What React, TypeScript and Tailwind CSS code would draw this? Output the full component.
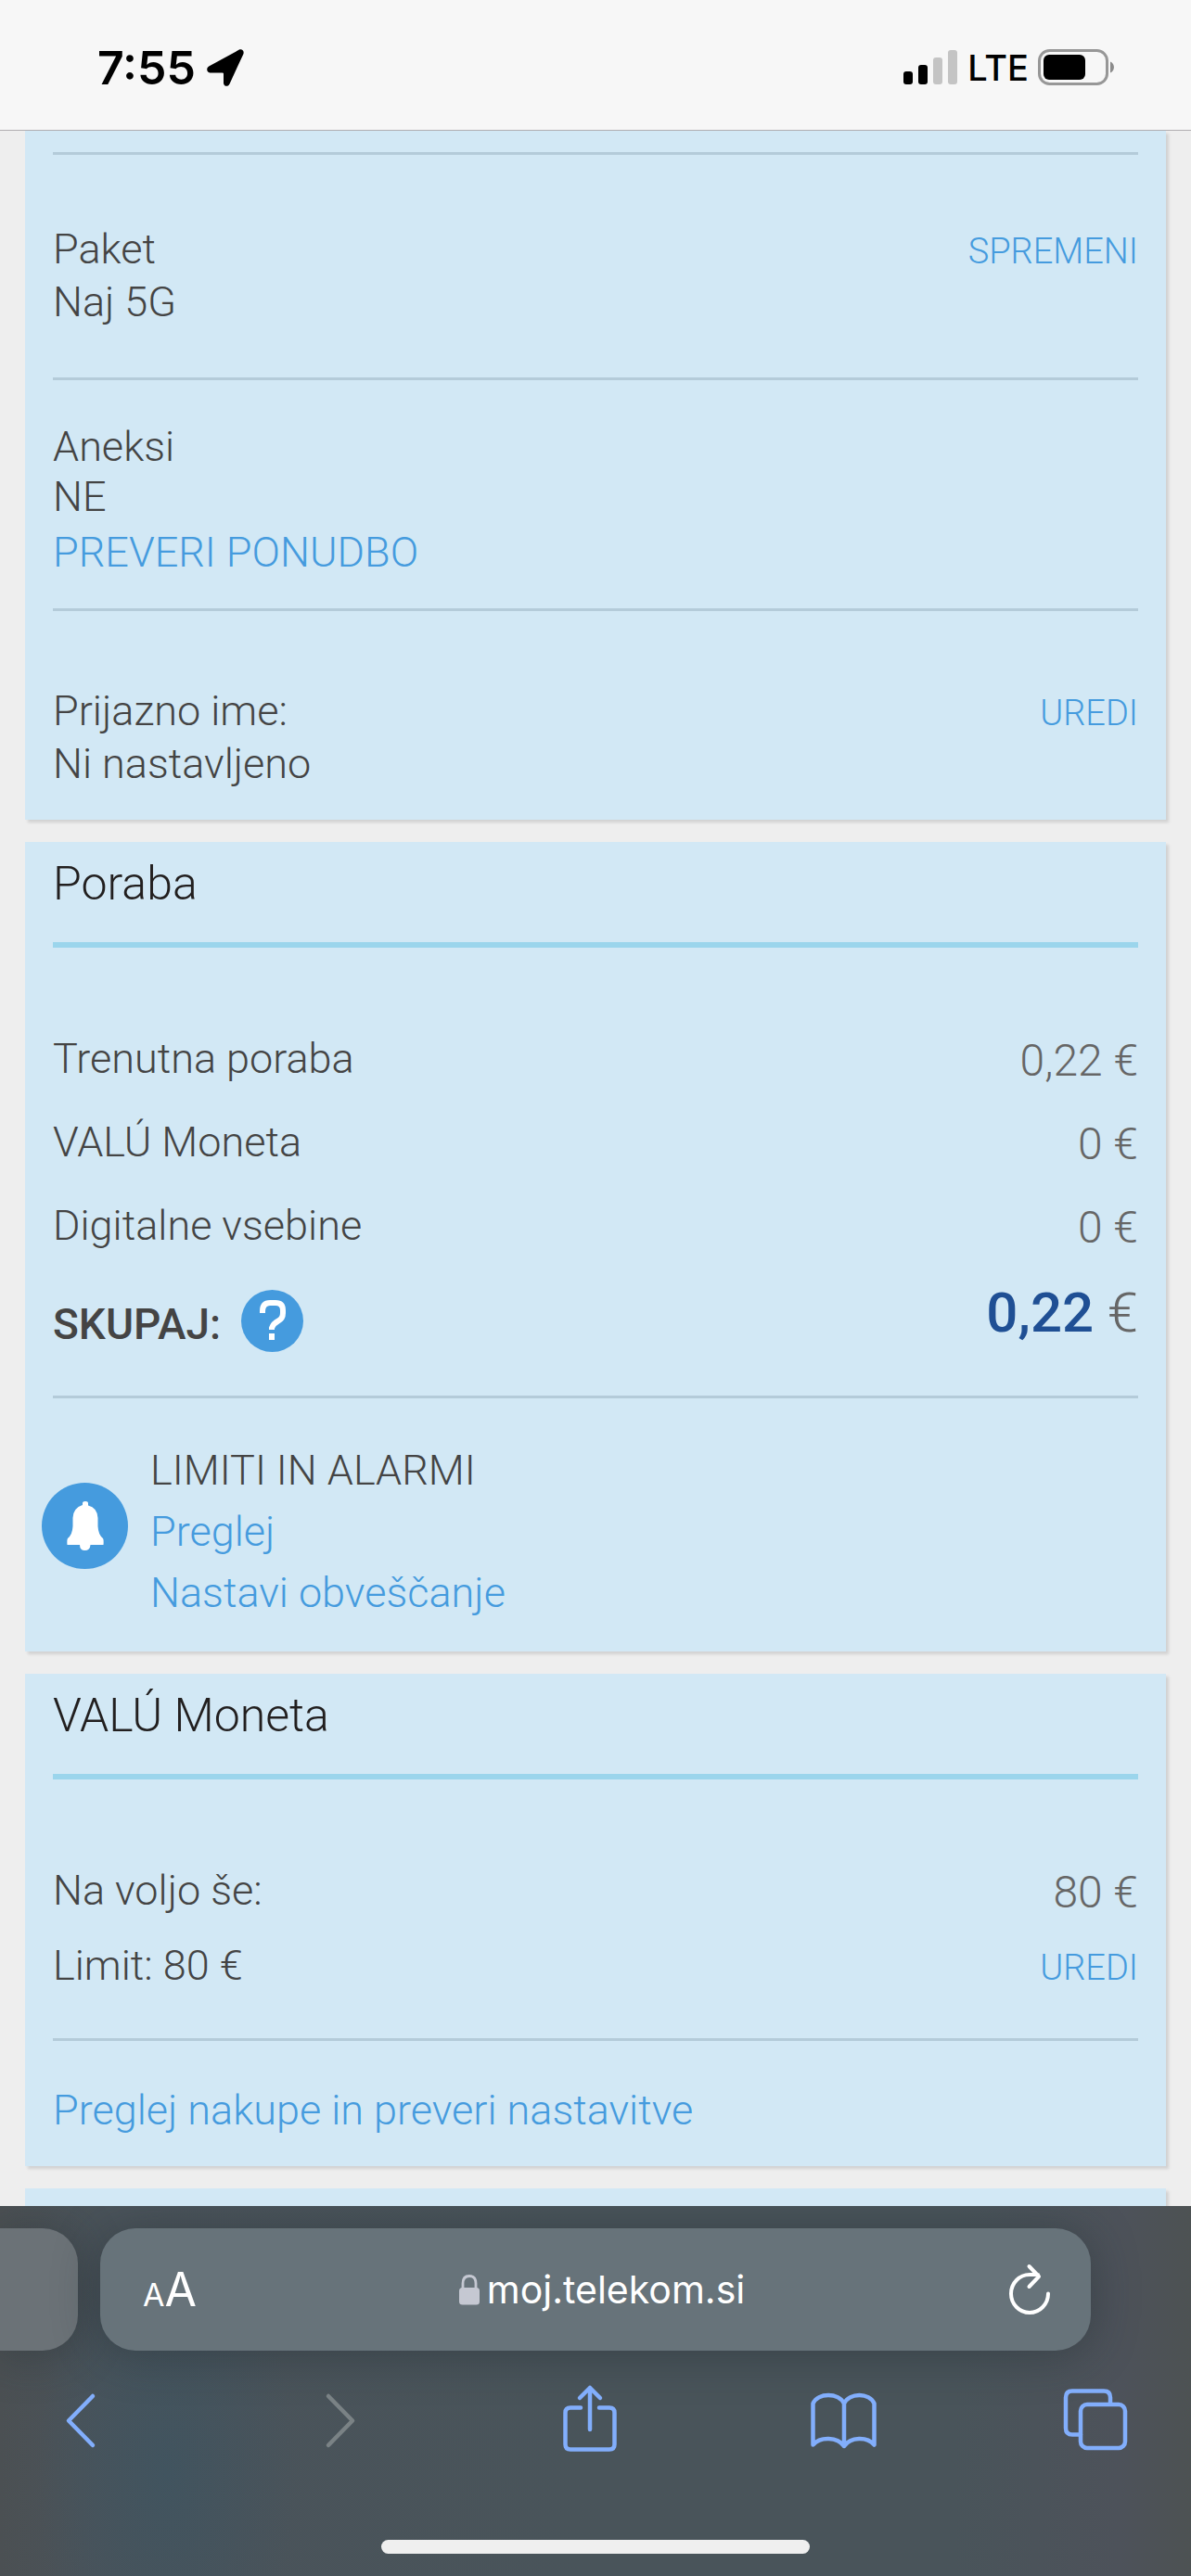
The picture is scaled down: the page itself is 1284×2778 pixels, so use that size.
import type { ReactNode } from 'react'
import { clsx } from 'clsx'

const usage = [
  { label: 'Trenutna poraba', value: '0,22 €' },
  { label: 'VALÚ Moneta', value: '0 €' },
  { label: 'Digitalne vsebine', value: '0 €' },
]

function Card({ children, className }: { children?: ReactNode; className?: string }) {
  return (
    <section
      className={clsx('shrink-0 bg-[#d2e8f5] px-[30px] shadow-[3px_3px_3px_rgba(0,0,0,0.12)]', className)}
    >
      {children}
    </section>
  )
}

function CardTitle({ children }: { children: ReactNode }) {
  return (
    <h2 className="border-b-6 border-[#9bd5ec] pt-[13px] pb-[31px] text-[50px] leading-[64px] font-[350] text-[#221f1f]">
      {children}
    </h2>
  )
}

function Divider() {
  return <hr className="h-[3px] border-0 bg-[#b4cbd9]" />
}

function TextLink({ children, className }: { children: ReactNode; className?: string }) {
  return (
    <a href="#" className={clsx('text-[#459bde]', className)}>
      {children}
    </a>
  )
}

function StatusBar() {
  return (
    <header className="flex h-[141px] shrink-0 items-start justify-between border-b border-[#b0adb0] bg-[#f7f7f7] pt-[43px] pr-[81px] pl-[105px] font-['Inter',sans-serif] text-black">
      <div className="flex items-center gap-3">
        <time className="text-[50px] leading-[60px] font-semibold">7:55</time>
        <svg className="h-[40px] w-[40px]" viewBox="0 0 40 40" aria-hidden>
          <path
            d="M34.500.8 2.200 18.600C-.9 20.400-.2 25.300 3.300 25.400H16.800Q18 25.400 18 26.600V36.500C18.200 40.600 23.100 41 24.500 37.400L39.400 5.200C40.600 2 37.600-.9 34.500.8Z"
            fill="currentColor"
          />
        </svg>
      </div>
      <div className="flex items-center gap-[10px]">
        <svg className="h-[38px] w-[59px]" viewBox="0 0 59 38" aria-hidden>
          <rect x="0" y="23" width="10" height="14" rx="3" />
          <rect x="16" y="16" width="10" height="21" rx="3" />
          <rect x="32" y="8" width="10" height="29" rx="3" fill="#c4c4c4" />
          <rect x="48" y="0" width="10" height="37" rx="3" fill="#c4c4c4" />
        </svg>
        <span className="text-[38px] leading-[60px] font-medium">LTE</span>
        <svg className="h-[40px] w-[84px]" viewBox="0 0 84 40" aria-hidden>
          <rect x="1.500" y="1.500" width="73" height="36" rx="11" fill="none" stroke="#979797" strokeWidth="3" />
          <rect x="6" y="6" width="45" height="27" rx="6" />
          <path d="M78 13.500C83.300 15.500 83.300 23.500 78 25.500Z" fill="#8b8b8b" />
        </svg>
      </div>
    </header>
  )
}

function SubscriptionCard() {
  return (
    <Card className="pt-[23px] pb-[32px]">
      <Divider />
      <div className="flex items-baseline justify-between pt-[73px] pb-[53px] leading-[57px]">
        <p>
          Paket
          <br />
          Naj 5G
        </p>
        <TextLink className="text-[38px]">SPREMENI</TextLink>
      </div>
      <Divider />
      <div className="pt-[45px] pb-[27px] leading-[54px]">
        <p>
          Aneksi
          <br />
          NE
        </p>
        <TextLink className="block leading-[66px]">PREVERI PONUDBO</TextLink>
      </div>
      <Divider />
      <div className="flex items-baseline justify-between pt-[79px] leading-[57px]">
        <p>
          Prijazno ime:
          <br />
          Ni nastavljeno
        </p>
        <TextLink className="text-[38px]">UREDI</TextLink>
      </div>
    </Card>
  )
}

function UsageCard() {
  return (
    <Card className="pb-[30px]">
      <CardTitle>Poraba</CardTitle>
      <dl className="pt-[75px]">
        {usage.map((row) => (
          <div key={row.label} className="flex h-[90px] justify-between leading-[90px]">
            <dt>{row.label}</dt>
            <dd className="pt-[2px] text-[48px] text-[#666]">{row.value}</dd>
          </div>
        ))}
        <div className="flex h-[138px] items-start justify-between">
          <dt className="flex h-[114px] items-center gap-[22px]">
            <span className="pt-2 text-[46px] font-medium">SKUPAJ:</span>
            <button
              type="button"
              aria-label="Pomoč"
              className="flex size-[67px] items-center justify-center rounded-full bg-[#459bde]"
            >
              <svg className="h-[44px] w-[28px]" viewBox="0 0 28 44" aria-hidden>
                <path
                  d="M3 14V12Q3 3 11 3H17Q25 3 25 11V14Q25 20 20 22.500T13 30V32"
                  fill="none"
                  stroke="#fff"
                  strokeWidth="6"
                />
                <rect x="10" y="36" width="6" height="7" fill="#fff" />
              </svg>
            </button>
          </dt>
          <dd className="text-[60px] leading-[98px] text-[#666]">
            <span className="font-medium text-[#1f4f94]">0,22</span> €
          </dd>
        </div>
      </dl>
      <Divider />
      <div className="-ml-3 flex items-start gap-6 pt-[45px] leading-[66px]">
        <span className="mt-[46px] flex size-[93px] items-center justify-center rounded-full bg-[#459bde]">
          <svg className="h-[54px] w-[40px]" viewBox="0 0 40 54" aria-hidden>
            <path
              d="M17 4V2Q17 0 20 0T23 2V4.500Q33 7 33.500 18V27Q34 36 39 40Q40 41.500 39.500 47H25.500Q25 53 19.500 53T14 47H.5Q0 41.500 1 40Q6 36 6.500 27V18Q7 7 17 4Z"
              fill="#fff"
            />
          </svg>
        </span>
        <div>
          <h3 className="font-[350]">LIMITI IN ALARMI</h3>
          <TextLink className="block">Preglej</TextLink>
          <TextLink className="block">Nastavi obveščanje</TextLink>
        </div>
      </div>
    </Card>
  )
}

function WalletCard() {
  return (
    <Card className="pb-[27px]">
      <CardTitle>VALÚ Moneta</CardTitle>
      <div className="pt-[79px] pb-[38px] leading-[81px]">
        <div className="flex h-[81px] justify-between">
          <span>Na voljo še:</span>
          <span className="pt-[2px] text-[48px] text-[#666]">80 €</span>
        </div>
        <div className="flex h-[81px] items-baseline justify-between">
          <span>Limit: 80 €</span>
          <TextLink className="text-[38px]">UREDI</TextLink>
        </div>
      </div>
      <Divider />
      <TextLink className="block pt-[42px] leading-[66px]">Preglej nakupe in preveri nastavitve</TextLink>
    </Card>
  )
}

function ToolbarButton({ label, children, disabled }: { label: string; children: ReactNode; disabled?: boolean }) {
  return (
    <button
      type="button"
      aria-label={label}
      disabled={disabled}
      className="h-[80px] w-[80px] text-[#82aefc] disabled:text-[#7a8285]"
    >
      <svg
        className="h-[80px] w-[80px]"
        viewBox="0 0 80 80"
        fill="none"
        stroke="currentColor"
        strokeWidth="4.500"
        strokeLinecap="round"
        strokeLinejoin="round"
        aria-hidden
      >
        {children}
      </svg>
    </button>
  )
}

function BrowserBar() {
  return (
    <footer className="z-10 flex shrink-0 flex-col overflow-hidden bg-[radial-gradient(ellipse_140px_260px_at_14%_72%,#41545f,transparent),linear-gradient(to_right,#4b5053,#4a535a_8%,#49545a_50%,#49545a_80%,#4d525a_94%,#4d5253)] pt-6 pb-6 font-['Inter',sans-serif] font-normal text-white">
      <div className="flex h-[132px] gap-6 pr-[108px]">
        <div className="w-[84px] rounded-r-[38px] bg-[#6b7277] shadow-[0_4px_50px_rgba(30,40,46,0.4)]" />
        <div className="flex flex-1 items-center justify-between rounded-[38px] bg-[#67737a] pr-[42px] pl-[46px] shadow-[0_4px_50px_rgba(30,40,46,0.4)]">
          <button type="button" aria-label="Nastavitve strani" className="flex items-baseline">
            <span className="text-[34px]">A</span>
            <span className="text-[50px]">A</span>
          </button>
          <button type="button" className="flex items-center gap-2">
            <svg className="h-[33px] w-[22px]" viewBox="0 0 22 33" aria-hidden>
              <path d="M4 15V9.500Q4 1.500 11 1.500T18 9.500V15" fill="none" stroke="#c5c8d2" strokeWidth="2.800" />
              <rect y="14" width="22" height="18.500" rx="3.500" fill="#c5c8d2" />
            </svg>
            <span className="text-[41px] leading-[60px]">moj.telekom.si</span>
          </button>
          <button type="button" aria-label="Osveži">
            <svg
              className="h-[56px] w-[48px]"
              viewBox="0 0 48 56"
              fill="none"
              stroke="currentColor"
              strokeWidth="4"
              strokeLinecap="round"
              strokeLinejoin="round"
              aria-hidden
            >
              <path d="M44 32.500A20 20.500 0 1 1 24 12H33M23.500 3 34 14 23.500 25" />
            </svg>
          </button>
        </div>
      </div>
      <nav className="flex h-[150px] items-center justify-between pr-[62px] pl-[46px]">
        <ToolbarButton label="Nazaj">
          <path d="M54 14 28 40.500 54 67" />
        </ToolbarButton>
        <ToolbarButton label="Naprej" disabled>
          <path d="M34 14 60 40.500 34 67" />
        </ToolbarButton>
        <ToolbarButton label="Deli">
          <path d="M32 26.500H21Q15.500 26.500 15.500 32V66Q15.500 71.500 21 71.500H63Q68.500 71.500 68.500 66V32Q68.500 26.500 63 26.500H52M42 50V5M31 16 42 5 53 16" />
        </ToolbarButton>
        <ToolbarButton label="Zaznamki">
          <path d="M42 22C36 10 14 10 8.500 22V66.500C16 57.500 35 57.500 42 68C49 57.500 67 57.500 74.500 66.500V22C69 10 48 10 42 22V68" />
        </ToolbarButton>
        <ToolbarButton label="Zavihki">
          <rect x="23" y="23" width="48" height="47" rx="7" />
          <path d="M23 55.500H14Q7 55.500 7 48.500V15.500Q7 8.500 14 8.500H48Q55 8.500 55 15.500V22.500" />
        </ToolbarButton>
      </nav>
      <div className="mx-auto mt-[54px] h-[15px] w-[36%] rounded-full bg-[#efefef]" />
    </footer>
  )
}

export default function App() {
  return (
    <div className="flex h-screen flex-col bg-[#eee] font-['Roboto',sans-serif] text-[45px] font-[350] text-[#444]">
      <StatusBar />
      <main className="flex min-h-0 flex-1 flex-col gap-6 overflow-hidden px-[27px]">
        <SubscriptionCard />
        <UsageCard />
        <WalletCard />
        <Card className="h-[200px]" />
      </main>
      <BrowserBar />
    </div>
  )
}
